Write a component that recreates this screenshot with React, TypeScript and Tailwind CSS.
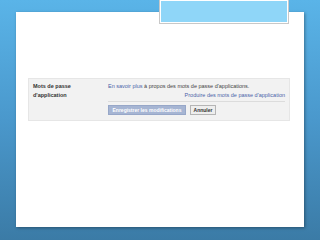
export default function App() {
  return (
    <div className="relative w-[320px] h-[240px] overflow-hidden bg-gradient-to-b from-[#5ab4e8] via-[#4a98cc] to-[#3b7ba6] pt-[12px] px-[16px] font-['Liberation_Sans',Arial,sans-serif]">
      {/* slide card */}
      <div className="h-[215px] bg-white shadow-[1px_1px_3px_rgba(0,0,0,0.35)] pt-[66px] px-[12px]">
        <div className="w-[262px] h-[43px] bg-[#f2f2f2] border border-[#e6e6e6] pt-[3px] pl-[4px] pr-[4px] flex text-[5.5px] leading-[9px]">
          <div className="w-[75px] font-bold text-[#333]">
            <div>Mots de passe</div>
            <div>d'application</div>
          </div>
          <div className="flex-1 flex flex-col">
            <div className="text-[#444]">
              <span className="text-[#4a64a8]">En savoir plus</span> à propos des mots de passe d'applications.
            </div>
            <div className="text-right text-[#4a64a8]">Produire des mots de passe d'application</div>
            <div className="mt-[1px] border-t border-[#dcdcdc] pt-[3px] flex gap-[4px]">
              <div className="w-[78px] h-[10px] bg-[#a6b5d3] border border-[#97a7c8] text-white text-[5px] font-bold text-center leading-[8px] whitespace-nowrap">
                Enregistrer les modifications
              </div>
              <div className="w-[26px] h-[10px] bg-[#eeeeee] border border-[#b5b5b5] text-[#333] text-[5px] font-bold text-center leading-[8px]">
                Annuler
              </div>
            </div>
          </div>
        </div>
      </div>
      {/* title placeholder box */}
      <div className="absolute left-[160px] top-0 w-[128px] h-[23px] bg-[#8fd6f8] border border-white ring-1 ring-[#c8c8c8]" />
    </div>
  );
}
